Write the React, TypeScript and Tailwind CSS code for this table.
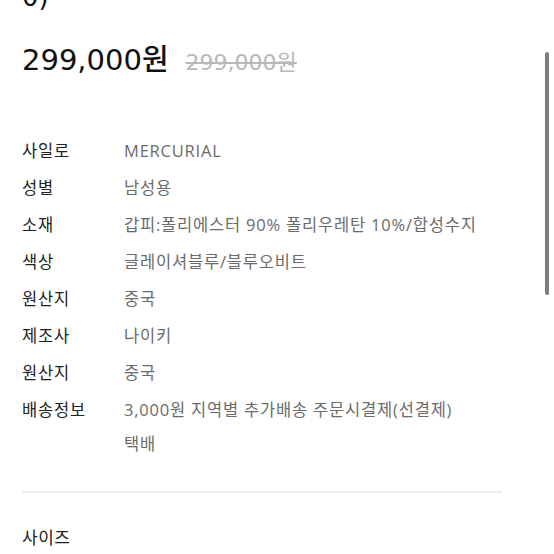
import React from 'react';

const specs: { label: string; value: string[] }[] = [
    { label: '사일로', value: ['MERCURIAL'] },
    { label: '성별', value: ['남성용'] },
    { label: '소재', value: ['갑피:폴리에스터 90% 폴리우레탄 10%/합성수지'] },
    { label: '색상', value: ['글레이셔블루/블루오비트'] },
    { label: '원산지', value: ['중국'] },
    { label: '제조사', value: ['나이키'] },
    { label: '원산지', value: ['중국'] },
    { label: '배송정보', value: ['3,000원 지역별 추가배송 주문시결제(선결제)', '택배'] },
];

const App: React.FC = () => {
    return (
        <div
            className="relative h-[554px] w-[554px] overflow-hidden bg-white"
            style={{ fontFamily: '"Open Sans", "Noto Sans CJK KR", sans-serif' }}
        >
            <div className="px-[22px]">
                {/* title tail */}
                <div
                    className="-mt-[20px] h-[34px] text-[26px] leading-[34px] text-[#111]"
                    style={{ fontFamily: '"DejaVu Sans", "Noto Sans CJK KR", sans-serif' }}
                >
                    0)
                </div>

                {/* Price */}
                <div
                    className="mt-[26px] flex items-baseline gap-[17px]"
                    style={{ fontFamily: '"DejaVu Sans", "Noto Sans CJK KR", sans-serif' }}
                >
                    <span className="text-[29px] font-medium leading-[40px] text-[#111]">299,000원</span>
                    <span className="text-[22px] text-[#b8b8b8] line-through decoration-[#b8b8b8]">299,000원</span>
                </div>

                {/* Spec table */}
                <div className="mt-[59px] flex flex-col gap-[13px]">
                    {specs.map((row, i) => (
                        <div key={i} className="flex text-[16.5px] leading-[24px] tracking-[0.8px]">
                            <div className="w-[102px] shrink-0 text-[#222]">{row.label}</div>
                            <div className="flex flex-col gap-[10px] text-[#6b6b6b]">
                                {row.value.map((v, j) => (
                                    <span key={j}>{v}</span>
                                ))}
                            </div>
                        </div>
                    ))}
                </div>

                <div className="mt-[35px] h-[2px] w-[480px] bg-[#ececec]" />

                <div className="mt-[32px] text-[17px] leading-[26px] tracking-[0.5px] text-[#222]">사이즈</div>
            </div>

            {/* scrollbar */}
            <div className="absolute left-[545px] top-[52px] h-[243px] w-[4px] rounded-full bg-[#7d7d7d]" />
        </div>
    );
};

export default App;
